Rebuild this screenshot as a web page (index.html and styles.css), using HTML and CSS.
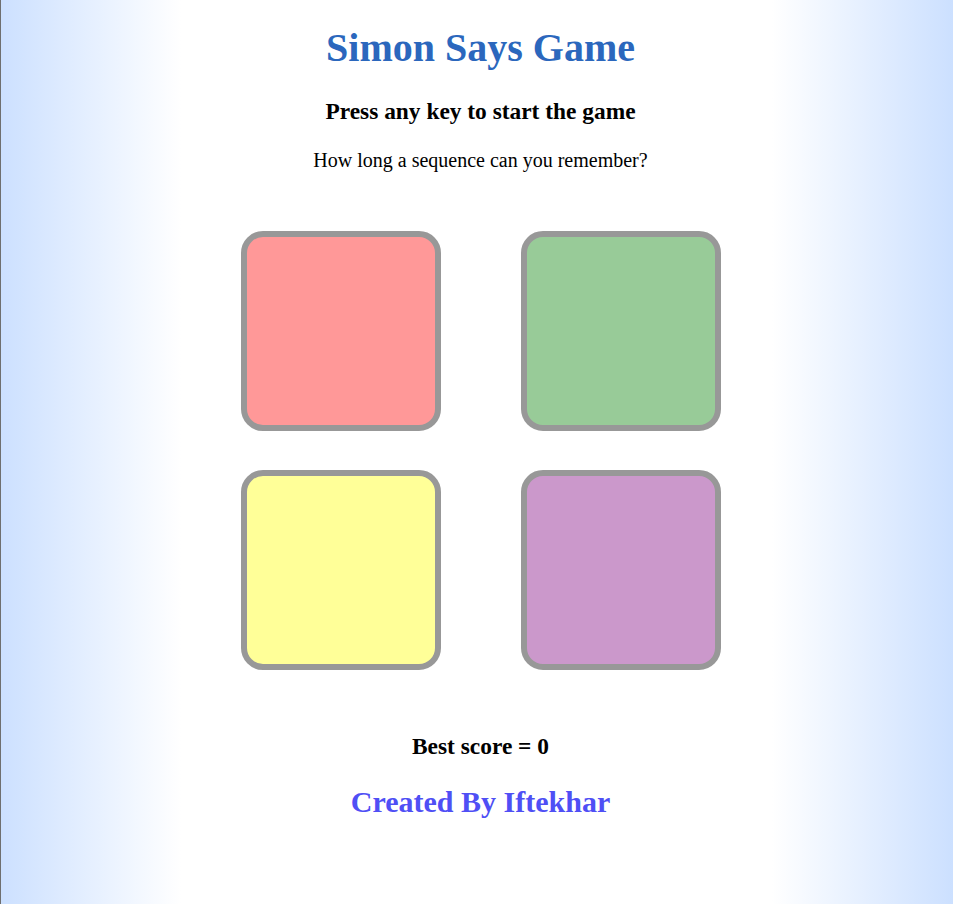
FILE: index.html
```html
<!DOCTYPE html>
<html lang="en">
<head>
<meta charset="UTF-8">
<title>Simon Says Game</title>
<link rel="stylesheet" href="styles.css">
</head>
<body>
  <main class="page">
    <h1 class="title">Simon Says Game</h1>
    <h2 class="status">Press any key to start the game</h2>
    <p class="tagline">How long a sequence can you remember?</p>
    <div class="board">
      <div class="btn red"></div>
      <div class="btn green"></div>
      <div class="btn yellow"></div>
      <div class="btn purple"></div>
    </div>
    <h3 class="best">Best score = 0</h3>
    <h2 class="credit">Created By Iftekhar</h2>
  </main>
</body>
</html>
```
FILE: styles.css
```css
html {
  height: 100%;
  border-left: 1px solid #6f6f6f;
  background: linear-gradient(to right, #cce0ff 0%, #ffffff 19%, #ffffff 81%, #cce0ff 100%);
  background-attachment: fixed;
}

body {
  margin: 0 0 0 7px;
  min-height: 100%;
  font-family: "Liberation Serif", "Times New Roman", serif;
  color: #000;
}

.page {
  display: flex;
  flex-direction: column;
  align-items: center;
  text-align: center;
  padding-top: 25px;
}

.title {
  margin: 0;
  font-size: 40px;
  line-height: 46px;
  font-weight: bold;
  color: #2b67bd;
}

.status {
  margin: 27px 0 0;
  font-size: 23.4px;
  line-height: 26px;
  font-weight: bold;
}

.tagline {
  margin: 25px 0 0;
  font-size: 20px;
  line-height: 23px;
}

.board {
  margin-top: 59px;
  display: grid;
  grid-template-columns: 200px 200px;
  grid-auto-rows: 200px;
  column-gap: 80px;
  row-gap: 39px;
}

.btn {
  box-sizing: border-box;
  border: 6px solid #000;
  border-radius: 22px;
  opacity: 0.4;
}

.red { background: #ff0000; }
.green { background: #008000; }
.yellow { background: #ffff00; }
.purple { background: #800080; }

.best {
  margin: 63px 0 0;
  font-size: 23.4px;
  line-height: 26px;
  font-weight: bold;
}

.credit {
  margin: 26px 0 0;
  font-size: 30px;
  line-height: 34px;
  font-weight: bold;
  color: #4f4ff5;
}
```
